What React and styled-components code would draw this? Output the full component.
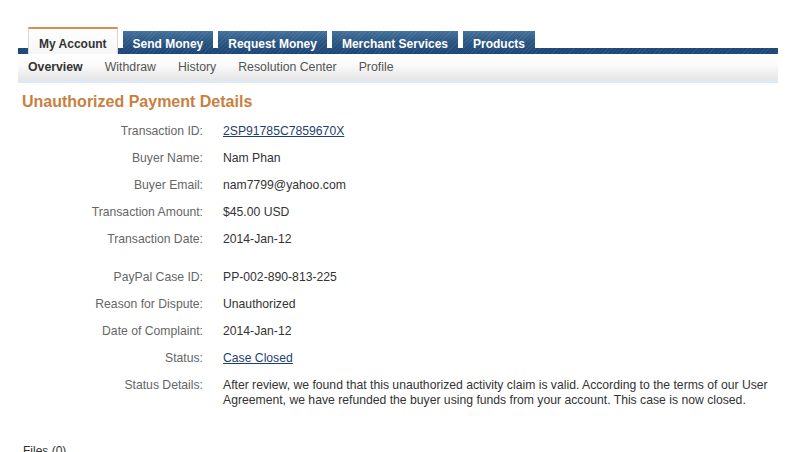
import React from "react";
import styled, { createGlobalStyle } from "styled-components";

const Global = createGlobalStyle`
  html, body { margin: 0; padding: 0; background: #fff; }
  body { font-family: "Liberation Sans", Arial, sans-serif; font-size: 12px; color: #333; }
`;

const Page = styled.div`
  width: 760px;
  margin-left: 18px;
  padding-top: 27px;
`;

const hatch = `repeating-linear-gradient(135deg, rgba(255,255,255,0.07) 0 1px, rgba(0,0,0,0) 1px 3px)`;

const TabRow = styled.div`
  display: flex;
  align-items: flex-end;
  gap: 5px;
  height: 27px;
  padding-left: 10px;
  background: ${hatch}, linear-gradient(#1d4777, #1d4777);
  background-size: 100% 6px, 100% 6px;
  background-position: left bottom, left bottom;
  background-repeat: no-repeat;
`;

const Tab = styled.div`
  box-sizing: border-box;
  padding: 0 10px;
  font-weight: bold;
  font-size: 12px;
  line-height: 14px;
  white-space: nowrap;
  ${(p) =>
    p.$active
      ? `
    height: 27px;
    padding-top: 8px;
    color: #333;
    background: linear-gradient(#ffffff, #f6f6f6);
    border-top: 2px solid #d98c55;
    border-left: 1px solid #d6d6d6;
    border-right: 1px solid #d6d6d6;
  `
      : `
    height: 23px;
    padding-top: 6px;
    color: #fff;
    background: ${hatch}, linear-gradient(#44709c, #2a5683 45%, #1c4575);
  `}
`;

const SubNav = styled.div`
  display: flex;
  gap: 22px;
  height: 26px;
  align-items: center;
  padding-left: 10px;
  background: linear-gradient(#ffffff, #fbfbfb 40%, #e6e6e6);
  border-bottom: 3px solid #dfe9f3;
`;

const SubItem = styled.span`
  font-size: 12.3px;
  line-height: 14px;
  color: ${(p) => (p.$active ? "#333" : "#555")};
  font-weight: ${(p) => (p.$active ? "bold" : "normal")};
`;

const Heading = styled.h1`
  margin: 9px 0 0 4px;
  font-size: 16px;
  line-height: 20px;
  font-weight: bold;
  color: #c9803f;
`;

const Details = styled.div`
  display: grid;
  grid-template-columns: 185px 555px;
  column-gap: 20px;
  row-gap: 12px;
  margin-top: 12px;
  font-size: 12.2px;
  line-height: 15px;
`;

const Label = styled.div`
  text-align: right;
  color: #666;
  ${(p) => (p.$spaced ? "margin-top: 11px;" : "")}
`;

const Value = styled.div`
  color: #333;
  ${(p) => (p.$spaced ? "margin-top: 11px;" : "")}
`;

const Link = styled.a`
  color: #1d3f6e;
  text-decoration: underline;
`;

const Files = styled.div`
  margin: 36px 0 0 5px;
  font-size: 12px;
  line-height: 15px;
  color: #333;
`;

const tabs = ["My Account", "Send Money", "Request Money", "Merchant Services", "Products"];
const subs = ["Overview", "Withdraw", "History", "Resolution Center", "Profile"];

const rows = [
  ["Transaction ID:", <Link href="#">2SP91785C7859670X</Link>],
  ["Buyer Name:", "Nam Phan"],
  ["Buyer Email:", "nam7799@yahoo.com"],
  ["Transaction Amount:", "$45.00 USD"],
  ["Transaction Date:", "2014-Jan-12"],
  ["PayPal Case ID:", "PP-002-890-813-225", true],
  ["Reason for Dispute:", "Unauthorized"],
  ["Date of Complaint:", "2014-Jan-12"],
  ["Status:", <Link href="#">Case Closed</Link>],
  [
    "Status Details:",
    "After review, we found that this unauthorized activity claim is valid. According to the terms of our User Agreement, we have refunded the buyer using funds from your account. This case is now closed.",
  ],
];

export default function App() {
  return (
    <>
      <Global />
      <Page>
        <TabRow>
          {tabs.map((t, i) => (
            <Tab key={t} $active={i === 0}>
              {t}
            </Tab>
          ))}
        </TabRow>
        <SubNav>
          {subs.map((s, i) => (
            <SubItem key={s} $active={i === 0}>
              {s}
            </SubItem>
          ))}
        </SubNav>
        <Heading>Unauthorized Payment Details</Heading>
        <Details>
          {rows.map(([l, v, sp]) => (
            <React.Fragment key={l}>
              <Label $spaced={sp}>{l}</Label>
              <Value $spaced={sp}>{v}</Value>
            </React.Fragment>
          ))}
        </Details>
        <Files>Files (0)</Files>
      </Page>
    </>
  );
}
